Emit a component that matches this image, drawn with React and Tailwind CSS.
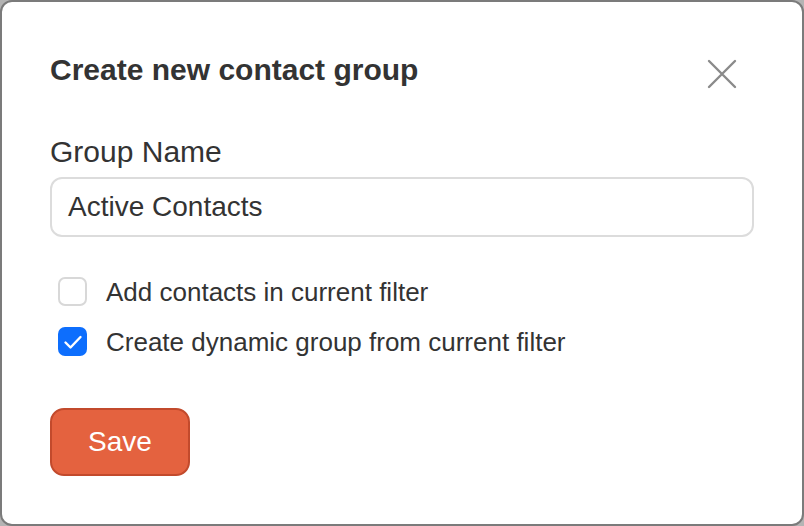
import React from "react";

export default function App() {
  const font = { fontFamily: '"Liberation Sans", Arial, sans-serif' };
  return (
    <div className="w-[804px] h-[526px] bg-[#b4b4b4]" style={font}>
      <div className="w-full h-full bg-white border-2 border-[#7b7b7b] rounded-[12px] pt-[53px] px-[48px] flex flex-col text-[#333333]">
        <div className="flex items-start justify-between">
          <h1 className="text-[30px] leading-none font-bold">Create new contact group</h1>
          <button className="mt-[4px] mr-[17px] w-[30px] h-[30px] flex items-center justify-center">
            <svg width="30" height="30" viewBox="0 0 30 30" fill="none" stroke="#8a8a8a" strokeWidth="2.4" strokeLinecap="round">
              <path d="M2 2 L28 28 M28 2 L2 28" />
            </svg>
          </button>
        </div>
        <label className="mt-[48px] text-[30px] leading-none">Group Name</label>
        <div className="mt-[10px] h-[60px] w-[704px] border-2 border-[#dcdcdc] rounded-[12px] flex items-center px-[16px]">
          <span className="text-[28px] leading-none">Active Contacts</span>
        </div>
        <div className="mt-[40px] flex flex-col gap-[21px] pl-[8px]">
          <div className="flex items-center gap-[19px]">
            <div className="w-[29px] h-[29px] rounded-[7px] border-2 border-[#d8d8d8] bg-white" />
            <span className="text-[26px] leading-none">Add contacts in current filter</span>
          </div>
          <div className="flex items-center gap-[19px]">
            <div className="w-[29px] h-[29px] rounded-[7px] bg-[#0d6efd] flex items-center justify-center">
              <svg width="22" height="22" viewBox="0 0 22 22" fill="none" stroke="white" strokeWidth="2.4" strokeLinecap="round" strokeLinejoin="round">
                <path d="M3.5 11.5 L8.5 16.5 L18.5 6" />
              </svg>
            </div>
            <span className="text-[26px] leading-none">Create dynamic group from current filter</span>
          </div>
        </div>
        <div className="mt-[52px]">
          <button className="w-[140px] h-[68px] rounded-[14px] bg-[#e4623f] border-2 border-[#c24a2c] text-white text-[28px] leading-none flex items-center justify-center">
            Save
          </button>
        </div>
      </div>
    </div>
  );
}
